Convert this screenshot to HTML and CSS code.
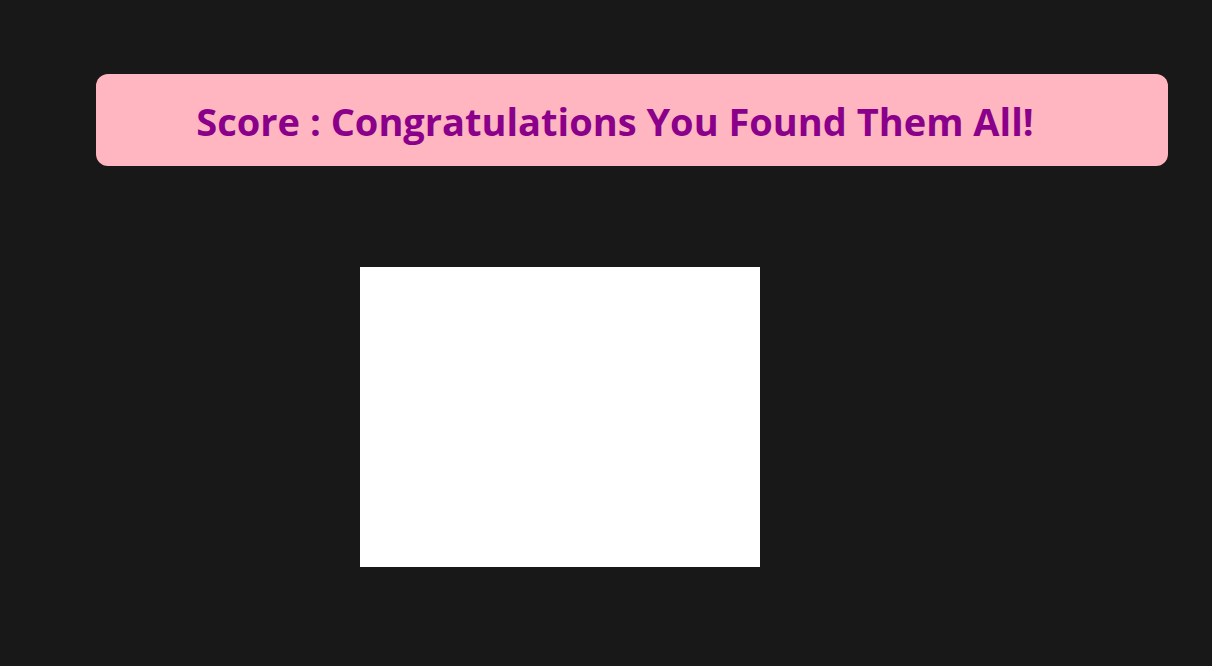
FILE: index.html
```html
<!DOCTYPE html>
<html lang="en">
<head>
<meta charset="utf-8">
<title>Score</title>
<link rel="stylesheet" href="styles.css">
</head>
<body>
  <header class="score-banner">
    <h1 class="score-text">Score : Congratulations You Found Them All!</h1>
  </header>
  <main class="stage">
    <div class="board"></div>
  </main>
</body>
</html>
```
FILE: styles.css
```css
html, body {
  margin: 0;
  padding: 0;
  background: #181818;
  height: 100%;
}

body {
  font-family: "Open Sans", "Noto Sans", "Liberation Sans", sans-serif;
  overflow: hidden;
}

.score-banner {
  margin: 74px 44px 0 96px;
  height: 92px;
  background: #ffb6c1;
  border-radius: 12px;
  display: flex;
  align-items: center;
  justify-content: center;
  padding-right: 34px;
}

.score-text {
  margin: 0;
  font-size: 38px;
  font-weight: 700;
  color: #8b008b;
  letter-spacing: 0;
  line-height: 1;
  padding-top: 2px;
}

.stage {
  padding: 101px 0 0 360px;
}

.board {
  width: 400px;
  height: 300px;
  background: #ffffff;
}
```
